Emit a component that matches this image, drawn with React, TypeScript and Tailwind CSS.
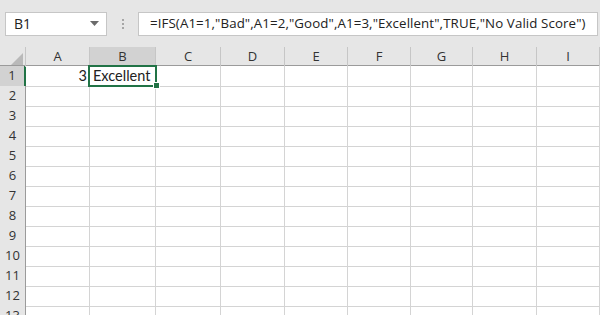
import React from "react";

const COLS = ["A", "B", "C", "D", "E", "F", "G", "H", "I"];
const ROWS = Array.from({ length: 13 }, (_, i) => i + 1);
const GRID = "grid grid-cols-[26px_64px_66px_65px_64px_63px_63px_62px_64px_63px]";

export default function App() {
  return (
    <div className="w-[600px] h-[315px] overflow-hidden bg-[#e6e6e6] font-['Open_Sans',sans-serif] text-[#222]">
      {/* toolbar */}
      <div className="h-[47px] flex items-start pt-[12px]">
        <div className="ml-[5px] w-[102px] h-[24px] bg-white border border-[#c6c6c6] flex items-center justify-between pl-[8px] pr-[6px]">
          <span className="text-[14px] leading-none">B1</span>
          <svg width="9" height="6" viewBox="0 0 9 6" className="mr-[1px]">
            <path d="M0 0h9L4.5 5z" fill="#6b6b6b" />
          </svg>
        </div>
        <div className="w-[31px] h-[24px] flex flex-col items-center justify-center gap-[2px]">
          <div className="w-[2px] h-[2px] bg-[#a6a6a6]" />
          <div className="w-[2px] h-[2px] bg-[#a6a6a6]" />
          <div className="w-[2px] h-[2px] bg-[#a6a6a6]" />
        </div>
        <div className="w-[460px] h-[24px] bg-white border border-[#c6c6c6] flex items-center pl-[11px]">
          <span className="text-[13.3px] leading-none whitespace-nowrap tracking-[0.1px]">
            =IFS(A1=1,"Bad",A1=2,"Good",A1=3,"Excellent",TRUE,"No Valid Score")
          </span>
        </div>
      </div>
      {/* column header */}
      <div className={`${GRID} h-[19px] border-b border-[#9b9b9b]`}>
        <div className="relative border-r border-[#c6c6c6]">
          <svg width="12" height="12" viewBox="0 0 12 12" className="absolute right-[2px] bottom-[2px]">
            <path d="M12 0V12H0z" fill="#b9b9b9" />
          </svg>
        </div>
        {COLS.map((c) => (
          <div
            key={c}
            className={`flex items-center justify-center text-[13px] text-[#333] border-r border-[#c6c6c6] ${
              c === "B" ? "bg-[#d2d2d2]" : ""
            }`}
          >
            {c}
          </div>
        ))}
      </div>
      {/* rows */}
      {ROWS.map((r) => (
        <div key={r} className={`${GRID} h-[20px] bg-white`}>
          <div
            className={`flex items-center justify-center text-[13px] text-[#333] border-b border-[#c6c6c6] border-r ${
              r === 1 ? "bg-[#d2d2d2] border-r-2 border-r-[#217346]" : "bg-[#e6e6e6] border-r-[#9b9b9b]"
            }`}
          >
            {r}
          </div>
          {COLS.map((c) => (
            <div key={c} className="relative border-r border-b border-[#d4d4d4] text-[14px] font-['Lato',sans-serif] leading-none">
              {r === 1 && c === "A" && (
                <div className="h-full flex items-center justify-end pr-[2px] text-[14.5px]">3</div>
              )}
              {r === 1 && c === "B" && (
                <>
                  <div className="h-full flex items-center pl-[3px] text-[14.5px]">Excellent</div>
                  <div className="absolute z-10 left-[-2px] top-[-1px] w-[69px] h-[22px] border-2 border-[#217346]">
                    <div className="absolute right-[-5px] bottom-[-4px] w-[7px] h-[7px] bg-[#217346] border border-white" />
                  </div>
                </>
              )}
            </div>
          ))}
        </div>
      ))}
    </div>
  );
}
